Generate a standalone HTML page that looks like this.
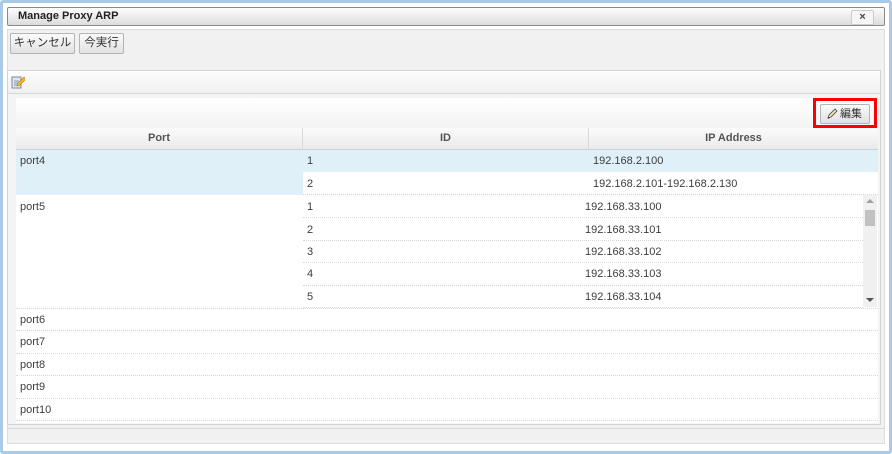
<!DOCTYPE html>
<html><head><meta charset="utf-8"><style>
*{margin:0;padding:0;box-sizing:border-box}
body{width:892px;height:454px;background:#fff;font-family:"Liberation Sans","Noto Sans CJK JP",sans-serif;font-size:11px;color:#3a3a3a;position:relative;overflow:hidden}
.a{position:absolute}
.outer{left:0;top:0;width:892px;height:454px;border:3px solid #a9cbe9;border-radius:3px;background:#fff}
.title{left:7px;top:7px;width:878px;height:19px;border:1px solid #8a8a8a;border-radius:2px;background:linear-gradient(#fdfdfd,#dcdcdc);font-weight:bold;font-size:11px;color:#222;padding:2px 0 0 10px}
.close{left:851px;top:10px;width:23px;height:15px;border:1px solid #ccc;border-radius:2px;background:#f6f6f6;font-size:11px;text-align:center;line-height:13px;font-weight:bold;color:#444}
.content{left:7px;top:29px;width:878px;height:415px;background:#f1f1f1;border:1px solid #ddd}
.btn{top:33px;height:21px;border:1px solid #b5b5b5;border-radius:2px;background:linear-gradient(#fafafa,#e2e2e2);font-size:11.5px;color:#333;text-align:center;line-height:19px}
.panel{left:7px;top:70px;width:874px;height:355px;border:1px solid #d3d3d3;background:#f4f4f4}
.tb{left:8px;top:71px;width:872px;height:23px;background:linear-gradient(#fdfdfd,#f0f0f0);border-bottom:1px solid #d8d8d8}
.grid{left:16px;top:98px;width:862px;height:325px;background:#fff}
.hb{left:16px;top:98px;width:862px;height:30px;background:linear-gradient(#fff,#f2f2f2)}
.colh{top:128px;height:22px;background:linear-gradient(#fbfbfb,#eaeaea);border-bottom:1px solid #d0d0d0;border-right:1px solid #d8d8d8;text-align:center;font-weight:bold;color:#555;font-size:11px;line-height:21px}
.dl{height:0;border-top:1px dotted #d8d8d8}
.t{font-size:11px;color:#3d3d3d}
</style></head><body>
<div class="a outer"></div>
<div class="a title">Manage Proxy ARP</div>
<div class="a close">×</div>
<div class="a content"></div>
<div class="a btn" style="left:10px;width:65px">キャンセル</div>
<div class="a btn" style="left:79px;width:45px">今実行</div>
<div class="a panel"></div>
<div class="a tb"></div>
<svg class="a" style="left:11px;top:75px" width="14" height="14" viewBox="0 0 14 14"><rect x="1" y="2" width="9" height="11" fill="#dfe6f0" stroke="#7d8ba0"/><path d="M3 6h5M3 8h5M3 10h4" stroke="#8a99b0"/><path d="M6 11l1-3 6-6 2 2-6 6z" fill="#f2b825" stroke="#b07a10" stroke-width=".6"/></svg>
<div class="a grid"></div>
<div class="a hb"></div>
<div class="a" style="left:813px;top:98px;width:64px;height:30px;border:3px solid #f00"></div>
<div class="a btn" style="left:820px;top:104px;width:50px;height:20px;font-size:11px;line-height:18px;padding-left:12px">編集</div>
<svg class="a" style="left:826px;top:108px" width="12" height="12" viewBox="0 0 12 12"><path d="M2 10l1-3 6-6 2 2-6 6z" fill="#f6e7b0" stroke="#555" stroke-width=".9"/><path d="M2 10l1.5-.5" stroke="#222"/></svg>
<div class="a colh" style="left:16px;width:287px">Port</div>
<div class="a colh" style="left:303px;width:286px">ID</div>
<div class="a colh" style="left:589px;width:289px;border-right:none">IP Address</div>
<div class="a" style="left:16px;top:150px;width:287px;height:45px;background:#e0f0f9"></div>
<div class="a" style="left:303px;top:150px;width:575px;height:22px;background:#e0f0f9"></div>
<div class="a t" style="left:20px;top:155px">port4</div>
<div class="a t" style="left:307px;top:155px">1</div>
<div class="a t" style="left:593px;top:155px">192.168.2.100</div>
<div class="a t" style="left:307px;top:178px">2</div>
<div class="a t" style="left:593px;top:178px">192.168.2.101-192.168.2.130</div>
<div class="a dl" style="left:303px;top:194px;width:575px"></div>
<div class="a t" style="left:20px;top:201px">port5</div>
<div class="a t" style="left:307px;top:201px">1</div><div class="a t" style="left:585px;top:201px">192.168.33.100</div>
<div class="a dl" style="left:303px;top:217px;width:560px"></div>
<div class="a t" style="left:307px;top:224px">2</div><div class="a t" style="left:585px;top:224px">192.168.33.101</div>
<div class="a dl" style="left:303px;top:240px;width:560px"></div>
<div class="a t" style="left:307px;top:246px">3</div><div class="a t" style="left:585px;top:246px">192.168.33.102</div>
<div class="a dl" style="left:303px;top:262px;width:560px"></div>
<div class="a t" style="left:307px;top:268px">4</div><div class="a t" style="left:585px;top:268px">192.168.33.103</div>
<div class="a dl" style="left:303px;top:285px;width:560px"></div>
<div class="a t" style="left:307px;top:291px">5</div><div class="a t" style="left:585px;top:291px">192.168.33.104</div>
<div class="a dl" style="left:303px;top:307px;width:560px"></div>
<div class="a" style="left:863px;top:195px;width:14px;height:112px;background:#f0f0f0"></div>
<div class="a" style="left:865px;top:210px;width:10px;height:16px;background:#c1c1c1"></div>
<div class="a" style="left:866px;top:199px;width:0;height:0;border-left:4px solid transparent;border-right:4px solid transparent;border-bottom:4px solid #a0a0a0"></div>
<div class="a" style="left:866px;top:298px;width:0;height:0;border-left:4px solid transparent;border-right:4px solid transparent;border-top:4px solid #555"></div>
<div class="a dl" style="left:16px;top:308px;width:862px"></div>
<div class="a t" style="left:20px;top:314px">port6</div>
<div class="a dl" style="left:16px;top:330px;width:862px"></div>
<div class="a t" style="left:20px;top:336px">port7</div>
<div class="a dl" style="left:16px;top:353px;width:862px"></div>
<div class="a t" style="left:20px;top:359px">port8</div>
<div class="a dl" style="left:16px;top:375px;width:862px"></div>
<div class="a t" style="left:20px;top:381px">port9</div>
<div class="a dl" style="left:16px;top:398px;width:862px"></div>
<div class="a t" style="left:20px;top:404px">port10</div>
<div class="a dl" style="left:16px;top:420px;width:862px"></div>
<div class="a" style="left:8px;top:428px;width:876px;height:1px;background:#d8d8d8"></div>
</body></html>
